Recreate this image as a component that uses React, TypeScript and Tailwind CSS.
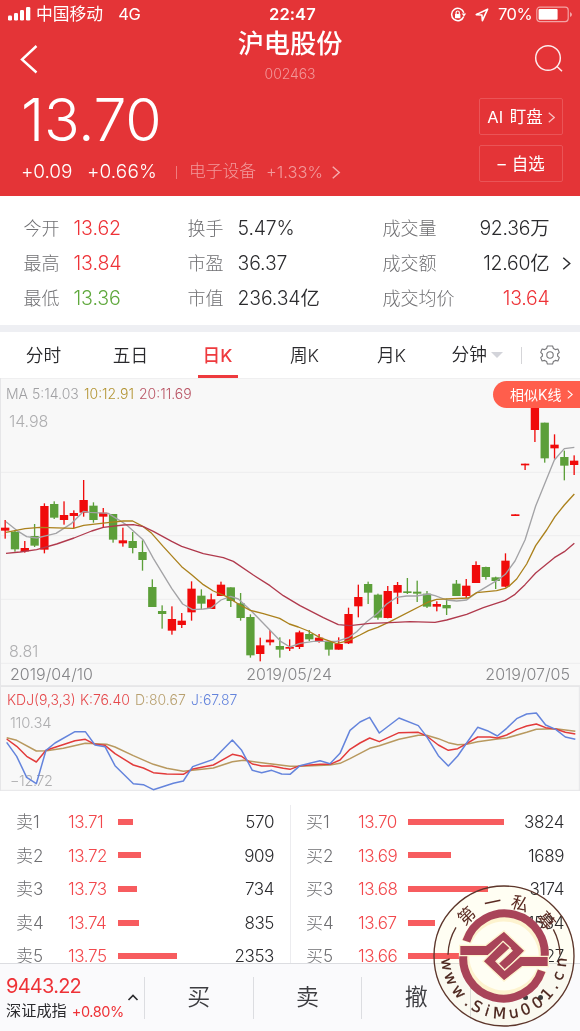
import type { ReactNode } from 'react';
import clsx from 'clsx';

type Candle = [color: 'r' | 'g', high: number, top: number, bottom: number, low: number];

// Chart units are a third of a pixel, y runs down from the first price label
const candles: Candle[] = [
  ['r', 360, 383, 392, 416], ['g', 390, 395, 448, 455], ['r', 423, 444, 454, 458], ['g', 372, 408, 437, 441],
  ['r', 310, 318, 449, 460], ['g', 304, 312, 353, 357], ['r', 304, 345, 360, 374], ['r', 331, 339, 348, 385],
  ['r', 240, 300, 338, 350], ['g', 307, 317, 360, 368], ['r', 324, 338, 350, 384], ['g', 342, 342, 419, 428],
  ['r', 383, 421, 430, 440], ['g', 396, 423, 444, 460], ['g', 421, 456, 480, 512], ['g', 538, 561, 621, 621],
  ['g', 616, 633, 642, 686], ['r', 619, 657, 692, 704], ['r', 639, 662, 675, 684], ['r', 544, 566, 637, 662],
  ['g', 568, 587, 611, 628], ['r', 581, 598, 627, 627], ['r', 545, 554, 588, 588], ['g', 562, 562, 603, 621],
  ['g', 579, 610, 654, 662], ['g', 643, 651, 766, 773], ['r', 713, 736, 762, 784], ['r', 690, 719, 727, 736],
  ['g', 712, 738, 749, 773], ['r', 718, 741, 746, 753], ['r', 692, 697, 741, 747], ['g', 690, 702, 718, 723],
  ['r', 702, 713, 724, 728], ['g', 724, 726, 749, 767], ['r', 712, 732, 749, 749], ['r', 623, 642, 730, 732],
  ['r', 554, 591, 619, 652], ['g', 545, 552, 578, 612], ['g', 581, 584, 653, 659], ['r', 558, 573, 654, 655],
  ['r', 546, 555, 578, 612], ['g', 534, 574, 579, 582], ['g', 542, 575, 581, 606], ['g', 573, 581, 620, 624],
  ['r', 604, 612, 620, 634], ['g', 596, 615, 625, 645], ['g', 540, 551, 588, 588], ['r', 537, 557, 588, 594],
  ['r', 484, 495, 549, 549], ['g', 500, 501, 531, 539], ['g', 530, 532, 543, 567], ['r', 460, 482, 560, 562],
  ['r', 343, 343, 348, 348], ['r', 191, 191, 196, 210], ['r', 10, 10, 90, 126], ['g', 68, 68, 175, 188],
  ['r', 103, 134, 145, 176], ['g', 152, 171, 197, 241], ['r', 166, 182, 195, 225],
];

const averages = [
  { color: '#a3a3a6', points: '18,365 50,391 80,410 110,414 140,407 168,400 215,370 251,334 270,337 325,340 340,350 360,362 380,375 430,420 460,475 515,565 548,612 578,629 610,627 633,624 663,600 692,589 715,597 751,630 800,680 842,724 870,741 900,730 940,724 1010,724 1045,713 1070,695 1100,665 1133,640 1160,612 1190,592 1220,588 1250,588 1285,582 1305,587 1340,600 1370,603 1400,600 1430,578 1490,542 1516,523 1545,483 1575,420 1607,318 1663,180 1693,146 1723,142' },
  { color: '#ab811c', points: '18,397 75,386 120,382 220,385 251,376 330,367 370,363 398,363 430,380 455,400 490,440 545,500 575,524 610,554 640,573 680,590 720,615 751,631 790,641 839,655 868,672 895,681 925,693 960,713 1010,731 1045,722 1080,705 1105,692 1133,682 1170,665 1285,606 1310,598 1405,594 1430,578 1490,572 1516,565 1530,556 1550,537 1580,492 1607,437 1640,390 1665,350 1693,315 1723,282' },
  { color: '#b03a4d', points: '18,460 60,456 110,449 170,432 222,414 275,393 310,382 370,375 400,374 430,380 460,394 515,424 545,439 610,461 670,473 700,484 760,525 810,557 850,587 900,617 970,653 1015,674 1050,677 1110,670 1170,668 1230,665 1305,667 1340,660 1400,643 1450,623 1516,601 1545,583 1575,554 1607,519 1663,473 1693,455 1723,430' },
];

const kdj = [
  { color: '#b8995f', points: '20,158 50,166 109,198 140,197 190,190 256,175 320,178 345,186 400,212 460,238 500,250 550,259 640,249 697,230 730,226 785,233 870,244 900,244 990,240 1020,235 1050,221 1109,190 1138,182 1197,163 1255,151 1280,151 1315,161 1345,173 1373,179 1400,178 1433,170 1492,162 1520,159 1580,142 1609,133 1667,131 1726,139' },
  { color: '#e23b3b', points: '20,162 50,184 80,214 109,231 138,196 225,167 256,163 285,178 315,181 345,206 400,240 430,249 460,263 500,267 550,268 575,253 640,240 697,208 725,214 757,237 785,243 815,243 850,250 870,253 900,242 960,238 990,238 1020,225 1050,193 1080,174 1109,159 1138,170 1197,143 1255,142 1280,153 1315,180 1345,196 1373,191 1400,176 1433,156 1470,156 1492,159 1520,150 1550,134 1580,123 1609,117 1637,128 1667,132 1696,142 1726,147' },
  { color: '#6484dc', points: '20,172 50,214 80,277 109,296 138,196 165,174 225,140 256,140 285,180 315,185 345,242 400,296 430,299 460,314 520,295 550,288 578,245 640,223 697,165 725,196 757,256 785,263 815,256 845,267 870,268 900,242 960,227 990,236 1020,205 1050,136 1080,111 1109,97 1138,144 1197,99 1255,122 1280,155 1315,212 1345,243 1373,213 1400,174 1433,127 1462,137 1492,153 1520,130 1550,101 1580,87 1609,84 1637,120 1667,133 1696,156 1726,163' },
];

const stats = [
  ['今开', '13.62', '换手', '5.47%', '成交量', '92.36万'],
  ['最高', '13.84', '市盈', '36.37', '成交额', '12.60亿'],
  ['最低', '13.36', '市值', '236.34亿', '成交均价', '13.64'],
];

const sells = [
  { label: '卖1', price: '13.71', bar: 14.5, qty: '570' },
  { label: '卖2', price: '13.72', bar: 23, qty: '909' },
  { label: '卖3', price: '13.73', bar: 18.5, qty: '734' },
  { label: '卖4', price: '13.74', bar: 21, qty: '835' },
  { label: '卖5', price: '13.75', bar: 59, qty: '2353' },
];

const buys = [
  { label: '买1', price: '13.70', bar: 96, qty: '3824' },
  { label: '买2', price: '13.69', bar: 42.5, qty: '1689' },
  { label: '买3', price: '13.68', bar: 80, qty: '3174' },
  { label: '买4', price: '13.67', bar: 27, qty: '1534' },
  { label: '买5', price: '13.66', bar: 71, qty: '2827' },
];

function Chevron({ className }: { className: string }) {
  return (
    <svg viewBox="0 0 10 16" className={className} fill="none" stroke="currentColor" strokeWidth="1.8">
      <path d="M1 1l8 7-8 7" />
    </svg>
  );
}

function StatusBar() {
  return (
    <div className="grid h-[28px] grid-cols-[269px_1fr_130px] items-center pt-px text-[16.5px]">
      <div className="flex items-center pl-2">
        <svg width="23" height="14" fill="#fff" className="-mt-px">
          <rect x="0" y="8.5" width="4" height="5" rx="1.2" />
          <rect x="6" y="6" width="4" height="7.5" rx="1.2" />
          <rect x="12" y="3" width="4" height="10.5" rx="1.2" />
          <rect x="18" y="0" width="4.3" height="13.5" rx="1.2" />
        </svg>
        <span className="ml-[5px] text-[16.8px]">中国移动</span>
        <span className="ml-[15px] tracking-[-0.2px]">4G</span>
      </div>
      <span className="font-semibold tracking-[0.1px]">22:47</span>
      <div className="flex items-center">
        <svg width="17" height="16" viewBox="0 0 17 16" fill="none" stroke="#fff" strokeWidth="1.5">
          <path d="M13.7 9.5A6.2 6.2 0 1 1 13.8 5.8" />
          <path d="M11.6 6.4h4.6l-2.2 3.2z" fill="#fff" stroke="none" />
          <rect x="5" y="7" width="5.4" height="4.2" fill="#fff" stroke="none" />
          <path d="M6.1 7V5.6a1.6 1.6 0 0 1 3.2 0V7" strokeWidth="1.2" />
        </svg>
        <svg width="14" height="14" viewBox="0 0 14 14" className="ml-[8px]" fill="none" stroke="#fff" strokeWidth="1.6" strokeLinejoin="round">
          <path d="M1.2 6.6L12.6 1.2 7.4 12.6 6.9 7z" />
        </svg>
        <span className="ml-[9px] w-[35px] tracking-[-0.5px]">70%</span>
        <svg width="37" height="17" className="-mt-px ml-[3px]" fill="none">
          <rect x="0.8" y="1.2" width="31.4" height="14.4" rx="3" stroke="#f3a3a4" strokeWidth="1.2" />
          <rect x="2.6" y="3" width="19" height="10.8" rx="1" fill="#fff" />
          <path d="M34 6v5q2-1 2-2.5t-2-2.5z" fill="#f3a3a4" />
        </svg>
      </div>
    </div>
  );
}

function OutlineButton({ children }: { children: ReactNode }) {
  return (
    <button className="flex h-[37px] w-[84px] items-center justify-center rounded-[2px] border border-[#ea5457] pt-px text-[16.5px]">
      {children}
    </button>
  );
}

function Header() {
  return (
    <header className="h-[196px] bg-[#e43437] text-white">
      <StatusBar />
      <div className="grid h-[64px] grid-cols-[120px_1fr_120px]">
        <svg width="60" height="60" fill="none" stroke="#fff" strokeWidth="2.4">
          <path d="M36.5 18L22 31.5 36.5 44.5" />
        </svg>
        <div className="flex flex-col items-center">
          <h1 className="h-[33px] text-[26.2px] leading-[31px] font-medium">沪电股份</h1>
          <span className="mt-[6px] text-[14px] leading-[14px] font-light tracking-[-0.1px] text-[#f29698]">002463</span>
        </div>
        <svg width="120" height="60" fill="none" stroke="#fff" strokeWidth="1.5" strokeOpacity="0.9">
          <circle cx="88" cy="30" r="12.3" />
          <path d="M97 38.5l5 4.8" />
        </svg>
      </div>
      <div className="flex justify-between pr-[17px] pl-[21px]">
        <div>
          <div className="h-[60px] text-[59px] leading-[56px] font-[350] tracking-[-0.3px]">13.70</div>
          <div className="mt-[10px] flex h-[20px] items-center text-[19px]">
            <span className="w-[66px] font-[350] tracking-[-0.1px]">+0.09</span>
            <span className="w-[89px] font-[350] tracking-[0.1px]">+0.66%</span>
            <span className="mr-[12px] h-[13px] w-px bg-[#f07c7e]" />
            <span className="w-[77px] text-[16.8px] font-light text-[#f29a9c]">电子设备</span>
            <span className="w-[63px] text-[16.5px] font-light text-[#f29a9c]">+1.33%</span>
            <Chevron className="ml-[2px] h-[13px] w-[10px] text-[#f5abad]" />
          </div>
        </div>
        <div className="mt-[6px] flex flex-col gap-[10px]">
          <OutlineButton>
            AI&nbsp;<span className="ml-[2px]">盯盘</span>
            <Chevron className="ml-[5px] h-[11px] w-[7px] text-[#f8c0c1]" />
          </OutlineButton>
          <OutlineButton>
            <span className="mr-[6px]">–</span>自选
          </OutlineButton>
        </div>
      </div>
    </header>
  );
}

function Stats() {
  return (
    <section className="h-[129px] pt-[15px] pl-[23.5px]">
      {stats.map(([a, av, b, bv, c, cv], i) => (
        <div key={a} className="flex h-[35px] items-center text-[18px] text-[#2b2b2e]">
          <span className="w-[50px] font-light text-[#6f6f72]">{a}</span>
          <span className={clsx('w-[114px] text-[19.6px] font-[350] tracking-[-0.1px]', i === 2 ? 'text-[#5fa83c]' : 'text-[#ee3237]')}>{av}</span>
          <span className="w-[50px] font-light text-[#6f6f72]">{b}</span>
          <span className="w-[145px] text-[19.4px] font-[350] tracking-[-0.1px]">{bv}</span>
          <span className="w-[76px] font-light text-[#6f6f72]">{c}</span>
          <span className={clsx('w-[91px] text-right text-[19.4px] font-[350] tracking-[-0.2px]', i === 2 && 'text-[#ee3237]')}>{cv}</span>
          {i === 1 && <Chevron className="ml-[12px] h-[13px] w-[9px]" />}
        </div>
      ))}
    </section>
  );
}

// Six blunt teeth around a small hub
function Gear() {
  return (
    <svg width="20" height="20" viewBox="-10 -10 20 20" className="ml-[18px]" fill="none" stroke="#77777a" strokeWidth="1.1" strokeLinejoin="round">
      <circle r="3.2" />
      <path d="M-2.6-9H2.6L3.4-6.5 5.3-5.400 7.9-6 9.300-2.600 7.600-1V1L9.300 2.600 7.900 6 5.300 5.400 3.400 6.500 2.600 9H-2.600L-3.400 6.500-5.300 5.400-7.900 6-9.300 2.600-7.600 1V-1L-9.300-2.600-7.900-6-5.300-5.400-3.400-6.500z" />
    </svg>
  );
}

function Tabs() {
  return (
    <nav className="flex h-[46px] text-[17.7px] text-[#29292c]">
      {['分时', '五日', '日K', '周K', '月K'].map((t) => (
        <div
          key={t}
          className={clsx('flex w-[87px] flex-col items-center pt-[8px]', t === '日K' ? 'font-medium text-[#ee3a3e]' : 'font-[350]')}
        >
          <span className="h-[35px] leading-[31px]">{t}</span>
          {t === '日K' && <span className="h-[3px] w-[40px] bg-[#ee3a3e]" />}
        </div>
      ))}
      <div className="flex flex-1 items-center pl-[16.5px] font-[350]">
        <span>分钟</span>
        <svg width="12" height="6" className="ml-[4px]">
          <path d="M0 0h12L6 6z" fill="#d3d4da" />
        </svg>
        <span className="ml-[18px] h-[17px] w-px bg-[#d5d5d8]" />
        <Gear />
      </div>
    </nav>
  );
}

function KChart() {
  return (
    <section className="relative h-[308px] bg-[#f8f8f8] font-light">
      <svg viewBox="0 -66 1740 924" className="block h-[308px] w-full" fill="none">
        {[-65, 217, 407, 598, 790].map((y) => (
          <path key={y} d={`M0 ${y}H1740`} stroke="#efeff0" strokeWidth="3.5" />
        ))}
        <path d="M1.5-66V858M0 857H1740" stroke="#e6e6e8" strokeWidth="3" />
        {candles.map(([c, high, top, bottom, low], i) => {
          const x = 15.5 + i * 29.43;
          const fill = c === 'r' ? '#f00b0b' : '#5c9f39';
          return (
            <g key={i} fill={fill}>
              <rect x={x - 2} y={high} width="4" height={low - high} />
              <rect x={x - 12.5} y={top} width="25" height={bottom - top} />
            </g>
          );
        })}
        {averages.map((l) => (
          <polyline key={l.color} points={l.points} stroke={l.color} strokeWidth="4" strokeLinejoin="round" />
        ))}
      </svg>
      <div className="absolute top-[8px] left-[6px] flex text-[14px] leading-[16px] text-[#a0a0a3]">
        <span className="w-[78px]">MA 5:14.03</span>
        <span className="w-[55px] text-[#b39433]">10:12.91</span>
        <span className="text-[#b95464]">20:11.69</span>
      </div>
      <span className="absolute top-[34px] left-[9px] text-[16px] leading-[18px] tracking-[-0.1px] text-[#aeaeb0]">14.98</span>
      <span className="absolute top-[264px] left-[9px] text-[16px] leading-[18px] tracking-[-0.1px] text-[#aeaeb0]">8.81</span>
      <div className="absolute top-[287px] left-[10px] flex w-[560px] justify-between text-[16px] leading-[18px] text-[#858588]">
        <span>2019/04/10</span>
        <span>2019/05/24</span>
        <span>2019/07/05</span>
      </div>
      <div className="absolute top-[3px] right-0 flex h-[27px] w-[87px] items-center rounded-l-full bg-[#ff5e4c] pl-[17px] text-[14px] font-normal text-white">
        相似K线
        <Chevron className="ml-[6px] h-[9px] w-[6px]" />
      </div>
    </section>
  );
}

function KdjChart() {
  return (
    <section className="relative h-[105px] bg-[#f8f8f8] font-light">
      <span className="absolute top-[28px] left-[10px] text-[14.8px] leading-[18px] tracking-[-0.2px] text-[#aeaeb0]">110.34</span>
      <span className="absolute top-[86px] left-[10px] text-[14.5px] leading-[18px] tracking-[-0.4px] text-[#aeaeb0]">−12.72</span>
      <svg viewBox="0 3 1740 315" className="relative block h-[105px] w-full" fill="none">
        <path d="M0 4.5H1740M1.5 3V318M1738 3V318M0 316H1740" stroke="#e6e6e8" strokeWidth="3" />
        {kdj.map((l) => (
          <polyline key={l.color} points={l.points} stroke={l.color} strokeWidth="4.5" strokeLinejoin="round" />
        ))}
      </svg>
      <div className="absolute top-[6px] left-[7px] flex text-[14px] leading-[16px] text-[#e5484b]">
        <span className="w-[73px]">KDJ(9,3,3)</span>
        <span className="w-[55px]">K:76.40</span>
        <span className="w-[56px] text-[#b8a06f]">D:80.67</span>
        <span className="text-[#6484dc]">J:67.87</span>
      </div>
    </section>
  );
}

function OrderColumn({ rows }: { rows: typeof sells }) {
  return (
    <div className="w-[290px] pr-4 pl-4">
      {rows.map((r) => (
        <div key={r.label} className="flex h-[33.6px] items-center text-[17px]">
          <span className="w-[52px] pt-[2px] font-light text-[#6f6f72]">{r.label}</span>
          <span className="w-[50px] pt-[2px] font-[350] tracking-[-0.4px] text-[#f2484c]">{r.price}</span>
          <span className="h-[6px] bg-[#f75c5f]" style={{ width: r.bar }} />
          <span className="ml-auto pt-[2px] font-[350] tracking-[-0.4px] text-[#2b2b2e]">{r.qty}</span>
        </div>
      ))}
    </div>
  );
}

function Footer() {
  return (
    <footer className="flex h-[68px] items-center border-t border-[#dcdde1] bg-[#fafafc]">
      <div className="flex w-[144px] items-center pl-[6px]">
        <div className="w-[121px] pt-[2px]">
          <div className="text-[20px] leading-[26px] tracking-[-0.75px] text-[#ee3237]">9443.22</div>
          <div className="flex h-[25px] items-center text-[15.2px] whitespace-nowrap text-[#2b2b2e]">
            深证成指<span className="ml-[5px] text-[14.5px] tracking-[-0.4px] text-[#ee3237]">+0.80%</span>
          </div>
        </div>
        <svg width="12" height="7" fill="none" stroke="#2b2b2e" strokeWidth="1.6">
          <path d="M1.5 6L6 1.5 10.5 6" />
        </svg>
      </div>
      {['买', '卖', '撤'].map((t) => (
        <div key={t} className="flex h-[42px] w-[108.7px] items-center justify-center border-l border-[#dcdde1] text-[23px] font-[350] text-[#3c3c40]">
          {t}
        </div>
      ))}
      <div className="flex h-[42px] flex-1 items-center justify-center gap-[10px] border-l border-[#dcdde1]">
        <span className="size-[5px] rounded-full bg-[#3c3c40]" />
        <span className="size-[5px] rounded-full bg-[#3c3c40]" />
        <span className="size-[5px] rounded-full bg-[#3c3c40]" />
      </div>
    </footer>
  );
}

const topChars: [string, number][] = [['第', -43], ['一', -12], ['私', 17], ['募', 50]];
const urlChars: [string, number][] = [
  ['w', 81.5], ['w', 67], ['w', 51.5], ['.', 38], ['S', 28], ['i', 17], ['M', 4.5],
  ['u', -9.6], ['0', -22], ['0', -35.5], ['1', -48.7], ['.', -59], ['c', -70], ['n', -83.6],
];

function HalfMark() {
  return (
    <g>
      <path d="M-113-42A120.5 120.5 0 0 1 119 16" stroke="#fdf3cf" strokeWidth="31" />
      <path d="M-113-44A120.5 120.5 0 0 1 120 16" stroke="#a94459" strokeWidth="24" />
    </g>
  );
}

// Watermark seal over the order book
function Seal() {
  return (
    <div className="absolute top-[884.5px] left-[432.5px] size-[142px]">
      <div className="absolute inset-0 rounded-full bg-[#fffef3] mix-blend-multiply" />
      <svg viewBox="-213 -213 426 426" className="absolute inset-0 size-full" fill="none">
        <circle r="210" stroke="#5c352c" strokeWidth="4" />
        <circle r="133" fill="#fffef3" />
        <path d="M-168-4A168 168 0 0 1-144-86M148-80A168 168 0 0 1 168-4" stroke="#5c352c" strokeWidth="4" />
        <HalfMark />
        <g transform="rotate(180)"><HalfMark /></g>
        {[0, 180].map((a) => (
          <path
            key={a}
            transform={`rotate(${a})`}
            d="M-133-32H-55L0-75 63-16 3 44-19 24 24-16-2-42-48-1H-133z"
            fill="#a94459"
            stroke="#fdf3cf"
            strokeWidth="4"
          />
        ))}
        {topChars.map(([c, a]) => (
          <text key={c} transform={`rotate(${a}) translate(0 -146)`} textAnchor="middle" fontSize="52" fill="#5a2a22">
            {c}
          </text>
        ))}
        {urlChars.map(([c, a], i) => (
          <text
            key={i}
            transform={`rotate(${a}) translate(0 188)`}
            textAnchor="middle"
            fontSize="46"
            fill="#4a241c"
            stroke="#4a241c"
            strokeWidth="0.8"
            className="font-['DejaVu_Sans',sans-serif]"
          >
            {c}
          </text>
        ))}
      </svg>
    </div>
  );
}

export default function App() {
  return (
    <div className="relative isolate h-[1031px] w-[580px] overflow-hidden bg-white font-['Inter','Noto_Sans_CJK_SC',sans-serif]">
      <Header />
      <Stats />
      <div className="h-[7px] bg-[#eeeff3]" />
      <Tabs />
      <KChart />
      <KdjChart />
      <div className="flex h-[172px] overflow-hidden pt-[14px]">
        <OrderColumn rows={sells} />
        <div className="-mr-px h-[158px] w-px bg-[#ececef]" />
        <OrderColumn rows={buys} />
      </div>
      <Footer />
      <Seal />
    </div>
  );
}
